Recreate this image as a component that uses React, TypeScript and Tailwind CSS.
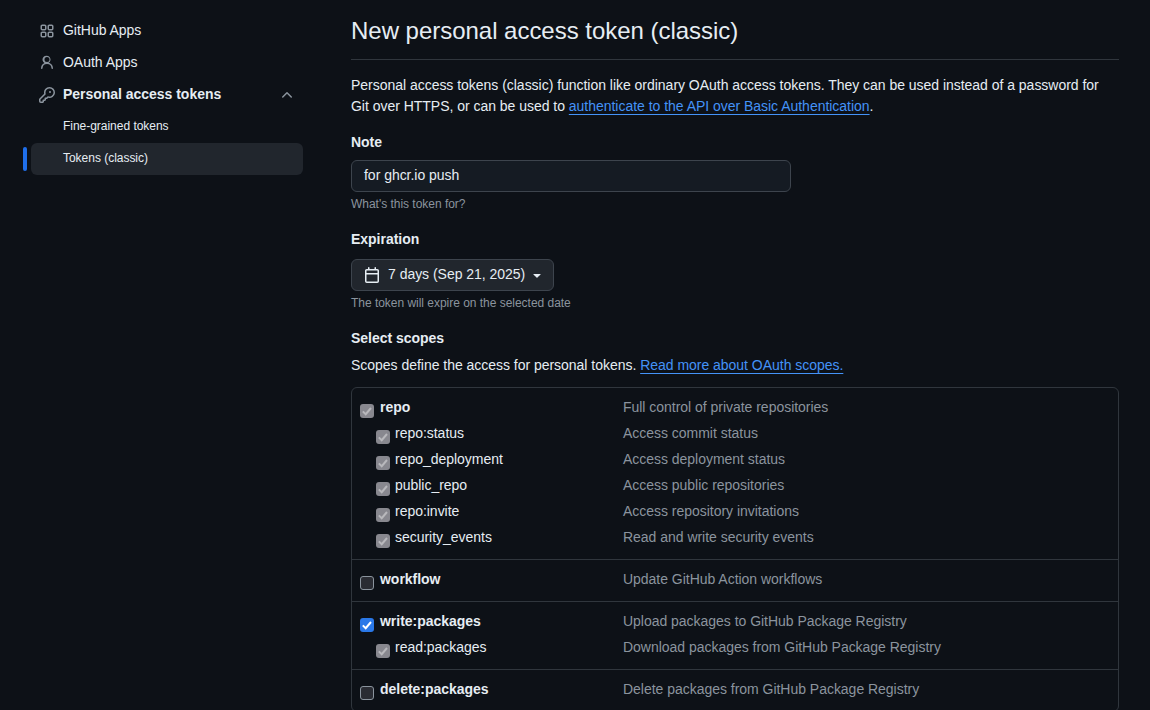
interface Scope {
  name: string;
  desc: string;
  state: "off" | "on" | "implied";
  sub?: { name: string; desc: string }[];
}

const SCOPES: Scope[] = [
  {
    name: "repo",
    desc: "Full control of private repositories",
    state: "implied",
    sub: [
      { name: "repo:status", desc: "Access commit status" },
      { name: "repo_deployment", desc: "Access deployment status" },
      { name: "public_repo", desc: "Access public repositories" },
      { name: "repo:invite", desc: "Access repository invitations" },
      { name: "security_events", desc: "Read and write security events" },
    ],
  },
  { name: "workflow", desc: "Update GitHub Action workflows", state: "off" },
  {
    name: "write:packages",
    desc: "Upload packages to GitHub Package Registry",
    state: "on",
    sub: [{ name: "read:packages", desc: "Download packages from GitHub Package Registry" }],
  },
  { name: "delete:packages", desc: "Delete packages from GitHub Package Registry", state: "off" },
];

// octicons, 16px versions
const ICONS = {
  apps: "M1.5 3.25c0-.966.784-1.75 1.75-1.75h2.5c.966 0 1.75.784 1.75 1.75v2.5A1.75 1.75 0 0 1 5.75 7.5h-2.5A1.75 1.75 0 0 1 1.5 5.75Zm7 0c0-.966.784-1.75 1.75-1.75h2.5c.966 0 1.75.784 1.75 1.75v2.5a1.75 1.75 0 0 1-1.75 1.75h-2.5A1.75 1.75 0 0 1 8.5 5.75Zm-7 7c0-.966.784-1.75 1.75-1.75h2.5c.966 0 1.75.784 1.75 1.75v2.5a1.75 1.75 0 0 1-1.75 1.75h-2.5a1.75 1.75 0 0 1-1.75-1.75Zm7 0c0-.966.784-1.75 1.75-1.75h2.5c.966 0 1.75.784 1.75 1.75v2.5a1.75 1.75 0 0 1-1.75 1.75h-2.5a1.75 1.75 0 0 1-1.75-1.75ZM3.25 3a.25.25 0 0 0-.25.25v2.5c0 .138.112.25.25.25h2.5A.25.25 0 0 0 6 5.75v-2.5A.25.25 0 0 0 5.75 3Zm7 0a.25.25 0 0 0-.25.25v2.5c0 .138.112.25.25.25h2.5a.25.25 0 0 0 .25-.25v-2.5a.25.25 0 0 0-.25-.25Zm-7 7a.25.25 0 0 0-.25.25v2.5c0 .138.112.25.25.25h2.5a.25.25 0 0 0 .25-.25v-2.5a.25.25 0 0 0-.25-.25Zm7 0a.25.25 0 0 0-.25.25v2.5c0 .138.112.25.25.25h2.5a.25.25 0 0 0 .25-.25v-2.5a.25.25 0 0 0-.25-.25Z",
  person: "M10.561 8.073a6.005 6.005 0 0 1 3.432 5.142.75.75 0 1 1-1.498.07 4.5 4.5 0 0 0-8.99 0 .75.75 0 1 1-1.498-.07 6.004 6.004 0 0 1 3.431-5.142 3.999 3.999 0 1 1 4.123 0ZM10.5 4.5a2.5 2.5 0 1 0-5 0 2.5 2.5 0 0 0 5 0Z",
  key: "M10.5 0a5.499 5.499 0 1 1-1.288 10.848l-.932.932a.749.749 0 0 1-.53.22H7v.75a.749.749 0 0 1-.22.53l-.5.5a.749.749 0 0 1-.53.22H5v.75a.749.749 0 0 1-.22.53l-.5.5a.749.749 0 0 1-.53.22h-2A1.75 1.75 0 0 1 0 14.25v-2c0-.199.079-.389.22-.53l4.932-4.932A5.5 5.5 0 0 1 10.5 0Zm-4 5.5c-.001.431.069.86.205 1.269a.75.75 0 0 1-.181.768L1.5 12.56v1.69c0 .138.112.25.25.25h1.69l.06-.06v-1.19a.75.75 0 0 1 .75-.75h1.19l.06-.06v-1.19a.75.75 0 0 1 .75-.75h1.19l1.023-1.025a.75.75 0 0 1 .768-.18A4 4 0 1 0 6.5 5.5ZM11 6a1 1 0 1 1 0-2 1 1 0 0 1 0 2Z",
  chevronUp: "M3.22 10.53a.749.749 0 0 1 0-1.06l4.25-4.25a.749.749 0 0 1 1.06 0l4.25 4.25a.749.749 0 1 1-1.06 1.06L8 6.811 4.28 10.53a.749.749 0 0 1-1.06 0Z",
  calendar: "M4.75 0a.75.75 0 0 1 .75.75V2h5V.75a.75.75 0 0 1 1.5 0V2h1.25c.966 0 1.75.784 1.75 1.75v10.5A1.75 1.75 0 0 1 13.25 16H2.75A1.75 1.75 0 0 1 1 14.25V3.75C1 2.784 1.784 2 2.75 2H4V.75A.75.75 0 0 1 4.75 0ZM2.5 7.5v6.75c0 .138.112.25.25.25h10.5a.25.25 0 0 0 .25-.25V7.5Zm10.75-4H2.75a.25.25 0 0 0-.25.25V6h11V3.75a.25.25 0 0 0-.25-.25Z",
  triangleDown: "m4.427 7.427 3.396 3.396a.25.25 0 0 0 .354 0l3.396-3.396A.25.25 0 0 0 11.396 7H4.604a.25.25 0 0 0-.177.427Z",
};

function Octicon({ d, className }: { d: string; className?: string }) {
  return (
    <svg width="16" height="16" viewBox="0 0 16 16" fill="currentColor" className={className}>
      <path fillRule="evenodd" d={d} />
    </svg>
  );
}

function Box({ state }: { state: Scope["state"] }) {
  if (state === "off") {
    return <span className="mt-[10px] block h-[14px] w-[14px] shrink-0 rounded-[3px] border border-[#8b949e] bg-[#2a2c33]" />;
  }
  return (
    <span
      className={
        state === "on"
          ? "mt-[10px] block h-[14px] w-[14px] shrink-0 rounded-[3px] bg-[#2a78e8] text-white"
          : "mt-[10px] block h-[14px] w-[14px] shrink-0 rounded-[3px] bg-[#88888f] text-[#b8b8bc]"
      }
    >
      <svg width="14" height="14" viewBox="0 0 14 14" fill="none" stroke="currentColor" strokeWidth="2" className="block">
        <path d="M2.8 7.4 5.7 10.2 11 4" />
      </svg>
    </span>
  );
}

function ScopeLine({ name, desc, state, child }: { name: string; desc: string; state: Scope["state"]; child?: boolean }) {
  return (
    <div className="flex h-[26px] text-[14px] leading-[26px]">
      <div className={child ? "flex w-[271px] gap-[5px] pl-[24px]" : "flex w-[271px] gap-[6px] pl-[8px]"}>
        <Box state={state} />
        <span className={child ? "text-[#e6edf3]" : "font-bold text-[#e6edf3]"}>{name}</span>
      </div>
      <span className="text-[#8b949e]">{desc}</span>
    </div>
  );
}

function NavItem({ icon, label, bold }: { icon: string; label: string; bold?: boolean }) {
  return (
    <div className="flex h-8 items-center pl-2 pr-[9px] text-[14px] text-[#e6edf3]">
      <span className="flex w-6 text-[#8b949e]">
        <Octicon d={icon} />
      </span>
      <span className={bold ? "pb-[2px] font-bold" : "pb-[2px]"}>{label}</span>
    </div>
  );
}

export default function App() {
  return (
    <div className="flex h-[710px] w-[1150px] overflow-hidden bg-[#0d1117] font-['Liberation_Sans',Arial,sans-serif] tracking-[-0.025px] text-[#e6edf3]">
      <aside className="w-[351px] shrink-0 pl-[31px] pt-[15px]">
        <div className="w-[272px]">
          <NavItem icon={ICONS.apps} label="GitHub Apps" />
          <NavItem icon={ICONS.person} label="OAuth Apps" />
          <div className="flex items-center justify-between pr-[2px]">
            <NavItem icon={ICONS.key} label="Personal access tokens" bold />
            <Octicon d={ICONS.chevronUp} className="mr-[6px] text-[#8b949e]" />
          </div>
          <div className="flex h-8 items-center pb-[2px] pl-8 text-[12px]">Fine-grained tokens</div>
          <div className="relative flex h-8 items-center rounded-md bg-[#21262d] pb-[2px] pl-8 text-[12px]">
            <span className="absolute left-[-8px] top-1 h-6 w-1 rounded-md bg-[#1f6feb]" />
            Tokens (classic)
          </div>
        </div>
      </aside>

      <main className="w-[768px] shrink-0">
        <div className="border-b border-[#30363d] pb-[10px] pt-[13px]">
          <h1 className="text-[24px] leading-[36px] font-normal">New personal access token (classic)</h1>
        </div>
        <p className="mt-[15px] text-[14px] leading-[21px]">
          Personal access tokens (classic) function like ordinary OAuth access tokens. They can be used instead of a password for Git over HTTPS, or can be used to{" "}
          <a className="text-[#4493f8] underline underline-offset-[3px]">authenticate to the API over Basic Authentication</a>.
        </p>

        <div className="mt-[15px] text-[14px] leading-[21px] font-bold">Note</div>
        <div className="mt-[7px] flex h-8 w-[440px] items-center rounded-md border border-[#3d444d] bg-[#151b23] px-3 pb-[2px] text-[14px]">for ghcr.io push</div>
        <div className="mt-[3px] text-[12px] leading-[18px] text-[#8b949e]">What's this token for?</div>

        <div className="mt-[16px] text-[14px] leading-[21px] font-bold">Expiration</div>
        <div className="mt-[9px] flex h-8 w-[203px] items-center rounded-md border border-[#3d444d] bg-[#21262d] pl-3 text-[14px]">
          <Octicon d={ICONS.calendar} className="mr-2" />
          <span className="pb-[2px]">7 days (Sep 21, 2025)</span>
          <Octicon d={ICONS.triangleDown} className="ml-1" />
        </div>
        <div className="mt-[3px] text-[12px] leading-[18px] text-[#8b949e]">The token will expire on the selected date</div>

        <div className="mt-[16px] text-[14px] leading-[21px] font-bold">Select scopes</div>
        <p className="mt-[6px] text-[14px] leading-[21px]">
          Scopes define the access for personal tokens.{" "}
          <a className="text-[#4493f8] underline underline-offset-[3px]">Read more about OAuth scopes.</a>
        </p>

        <div className="mt-[11px] rounded-md border border-[#30363d]">
          {SCOPES.map((s, i) => (
            <div key={s.name} className={i === 0 ? "pb-[9px] pt-[6px]" : "border-t border-[#30363d] pb-[9px] pt-[6px]"}>
              <ScopeLine name={s.name} desc={s.desc} state={s.state} />
              {s.sub?.map((c) => <ScopeLine key={c.name} name={c.name} desc={c.desc} state="implied" child />)}
            </div>
          ))}
        </div>
      </main>
    </div>
  );
}
